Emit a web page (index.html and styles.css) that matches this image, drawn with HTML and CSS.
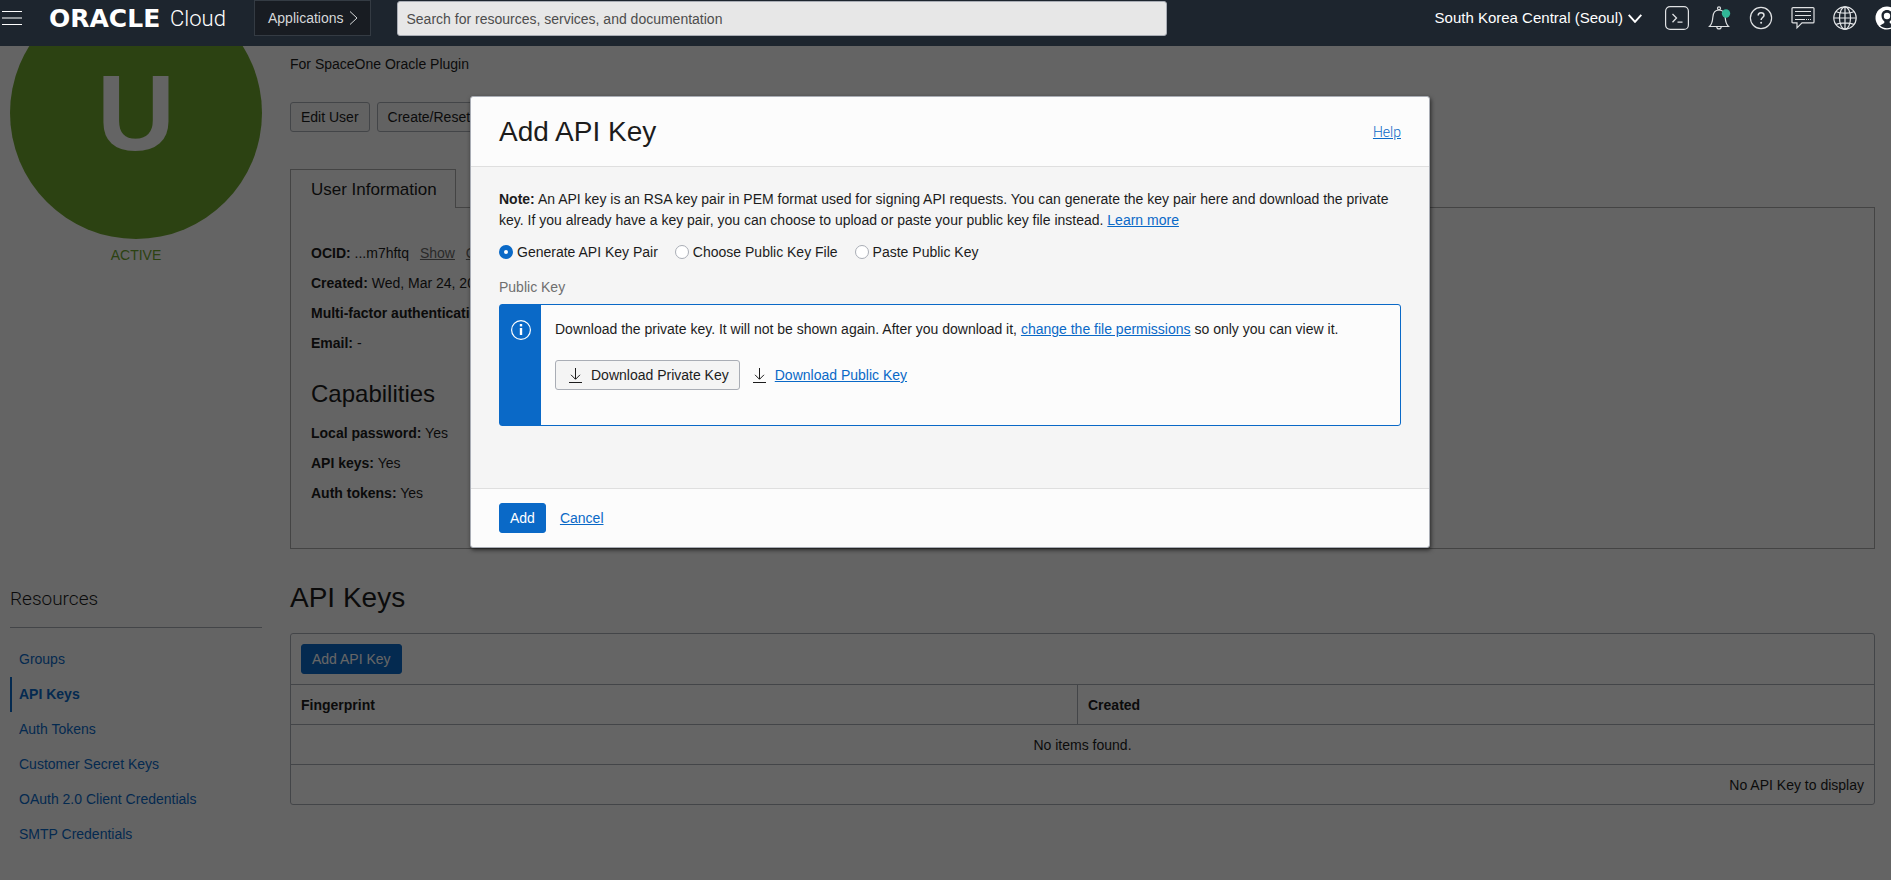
FILE: index.html
```html
<!DOCTYPE html>
<html lang="en">
<head>
<meta charset="utf-8">
<title>Oracle Cloud Infrastructure</title>
<meta name="viewport" content="width=device-width, initial-scale=1">
<link rel="stylesheet" href="styles.css">
</head>
<body>
<header class="topbar">
  <button class="icon-button menu-button" aria-label="Menu">
    <svg width="20" height="16" viewBox="0 0 20 16" fill="none" stroke="#fff"><path d="M0 1.5h20M0 14.5h20"/><path d="M0 8h20" stroke="#8f9498" stroke-width="2"/></svg>
  </button>
  <a class="brand" href="#"><span class="brand-name">ORACLE</span><span class="brand-product">Cloud</span></a>
  <button class="applications">Applications
    <svg width="9" height="14" viewBox="0 0 9 14" fill="none" stroke="#d5d7d9"><path d="M1 .5 8 7 1 13.5"/></svg>
  </button>
  <input class="search" type="search" aria-label="Search" placeholder="Search for resources, services, and documentation">
  <div class="tools">
    <button class="region">South Korea Central (Seoul)
      <svg width="14" height="9" viewBox="0 0 14 9" fill="none" stroke="#fff" stroke-width="2"><path d="m.7.8 6.3 7 6.3-7"/></svg>
    </button>
    <button class="icon-button" aria-label="Cloud Shell">
      <svg width="24" height="24" viewBox="0 0 24 24" fill="none" stroke="#dfe1e3"><rect x=".6" y=".6" width="22.8" height="22.8" rx="4.5" stroke-width="1.2"/><path d="m7.5 8 4 4-4 4.200M12.500 16.200h5" stroke-width="1.300"/></svg>
    </button>
    <button class="icon-button" aria-label="Announcements">
      <svg width="24" height="24" viewBox="0 0 24 24" fill="none" stroke="#dfe1e3" stroke-width="1.200"><path d="M2.500 20.500c2.600-2.500 3-5 3.300-9C6 7 7.700 4 12 4s6 3 6.200 7.500c.3 4 .7 6.500 3.300 9z"/><circle cx="12" cy="2.300" r="1.500"/><path d="M9.800 20.700a2.200 2.200 0 1 0 4.400 0"/><circle cx="19" cy="7.500" r="4.200" fill="#31b797" stroke="none"/></svg>
    </button>
    <button class="icon-button" aria-label="Help menu">
      <svg width="24" height="24" viewBox="0 0 24 24" fill="none" stroke="#dfe1e3"><circle cx="12" cy="12" r="10.600" stroke-width="1.200"/><path d="M9.200 9.600c0-1.700 1.100-2.800 2.900-2.800s2.900 1 2.900 2.500c0 2.200-2.900 2.300-2.900 4.700" stroke-width="1.500"/><circle cx="12.100" cy="16.700" r="1" fill="#dfe1e3" stroke="none"/></svg>
    </button>
    <button class="icon-button" aria-label="Chat">
      <svg width="24" height="24" viewBox="0 0 24 24" fill="none" stroke="#dfe1e3"><path d="M2 1.600h20q1 0 1 1v13.300q0 1-1 1h-11l-5 5v-5H2q-1 0-1-1V2.600q0-1 1-1z" stroke-width="1.200"/><path d="M4 5.500h16M4 9.500h16"/><path d="M4 13.500h10" /><path d="M15 13.500h6" stroke-dasharray="1 1"/></svg>
    </button>
    <button class="icon-button" aria-label="Language">
      <svg width="24" height="24" viewBox="0 0 24 24" fill="none" stroke="#e3e5e7" stroke-width="1.200"><circle cx="12" cy="12" r="11.200"/><ellipse cx="12" cy="12" rx="5.500" ry="11.200"/><path d="M12 .8v22.400M.8 12h22.400M3 5.500c4 2.200 14 2.200 18 0M3 18.500c4-2.200 14-2.200 18 0"/></svg>
    </button>
    <button class="icon-button" aria-label="Profile">
      <svg width="24" height="24" viewBox="0 0 24 24"><circle cx="12" cy="12" r="11.500" fill="#fff"/><path d="M12 4c-3.300 0-5.500 2.300-5.500 5.600 0 2.400 1 4.500 2.800 5.700v1.800l-4.300 2.400c4 3.600 10 3.600 14 0l-4.300-2.400v-1.800c1.800-1.200 2.800-3.300 2.800-5.700C17.500 6.300 15.300 4 12 4z" fill="#1d252e"/><circle cx="12" cy="10" r="3.200" fill="#fff"/></svg>
    </button>
  </div>
</header>

<main class="stage">
  <div class="page">
    <aside class="profile">
      <div class="avatar">U</div>
      <p class="status">ACTIVE</p>
    </aside>
    <section class="details">
      <p class="description">For SpaceOne Oracle Plugin</p>
      <div class="actions">
        <button class="button">Edit User</button>
        <button class="button">Create/Reset Password</button>
      </div>
      <h2 class="tab">User Information</h2>
      <div class="panel">
        <p><b>OCID:</b> ...m7hftq <a class="muted" href="#">Show</a> <a class="muted" href="#">Copy</a></p>
        <p><b>Created:</b> Wed, Mar 24, 2021</p>
        <p><b>Multi-factor authentication:</b> Disabled</p>
        <p><b>Email:</b> -</p>
        <h3>Capabilities</h3>
        <p><b>Local password:</b> Yes</p>
        <p><b>API keys:</b> Yes</p>
        <p><b>Auth tokens:</b> Yes</p>
      </div>
    </section>
    <aside class="resources">
      <h2>Resources</h2>
      <nav class="links">
        <a href="#">Groups</a>
        <a href="#" class="current">API Keys</a>
        <a href="#">Auth Tokens</a>
        <a href="#">Customer Secret Keys</a>
        <a href="#">OAuth 2.0 Client Credentials</a>
        <a href="#">SMTP Credentials</a>
      </nav>
    </aside>
    <section class="keys">
      <h1>API Keys</h1>
      <div class="card">
        <div class="toolbar"><button class="button primary">Add API Key</button></div>
        <table>
          <thead><tr><th class="fingerprint">Fingerprint</th><th>Created</th></tr></thead>
          <tbody><tr><td colspan="2" class="empty">No items found.</td></tr></tbody>
          <tfoot><tr><td colspan="2" class="count">No API Key to display</td></tr></tfoot>
        </table>
      </div>
    </section>
  </div>

  <div class="overlay">
    <div class="dialog" role="dialog" aria-modal="true" aria-labelledby="dialog-title">
      <div class="dialog-head">
        <h2 id="dialog-title">Add API Key</h2>
        <a class="help" href="#">Help</a>
      </div>
      <div class="dialog-body">
        <p class="note"><b>Note:</b> An API key is an RSA key pair in PEM format used for signing API requests. You can generate the key pair here and download the private key. If you already have a key pair, you can choose to upload or paste your public key file instead. <a href="#">Learn more</a></p>
        <div class="choices">
          <label><input type="radio" name="source" checked>Generate API Key Pair</label>
          <label><input type="radio" name="source">Choose Public Key File</label>
          <label><input type="radio" name="source">Paste Public Key</label>
        </div>
        <p class="caption">Public Key</p>
        <div class="notice">
          <div class="notice-mark">
            <svg width="20" height="20" viewBox="0 0 20 20" fill="none" stroke="#fff"><circle cx="10" cy="10" r="9.400" stroke-width="1.200"/><path d="M10 8v7" stroke-width="2.400"/><path d="M10 4v2.400" stroke-width="2.400"/></svg>
          </div>
          <div class="notice-body">
            <p>Download the private key. It will not be shown again. After you download it, <a href="#">change the file permissions</a> so only you can view it.</p>
            <div class="downloads">
              <button class="button download">
                <svg width="13" height="16" viewBox="0 0 13 16" fill="none" stroke="#1c1c1c"><path d="M6.500 1v11M2 7.800l4.500 4.500L11 7.800M0 15.500h13"/></svg>Download Private Key</button>
              <svg width="13" height="16" viewBox="0 0 13 16" fill="none" stroke="#1c1c1c"><path d="M6.500 1v11M2 7.800l4.500 4.500L11 7.800M0 15.500h13"/></svg>
              <a href="#">Download Public Key</a>
            </div>
          </div>
        </div>
      </div>
      <div class="dialog-foot">
        <button class="button primary">Add</button>
        <a href="#">Cancel</a>
      </div>
    </div>
  </div>
</main>
</body>
</html>
```
FILE: styles.css
```css
* {
  box-sizing: border-box;
}

body {
  margin: 0;
  background: #fafafa;
  color: #1c1c1c;
  font: 14px/20px "Liberation Sans", Arial, sans-serif;
  overflow: hidden;
}

h1, h2, h3, p {
  margin: 0;
  font-weight: normal;
}

a {
  color: #0a69c7;
}

button, input {
  font: inherit;
}

svg {
  display: block;
  flex: none;
}

/* Top bar */
.topbar {
  display: flex;
  align-items: flex-start;
  height: 46px;
  padding-left: 2px;
  background: #1d252e;
  overflow: hidden;
}

.icon-button {
  display: flex;
  align-items: center;
  height: 36px;
  padding: 0;
  border: 0;
  background: none;
}

.menu-button {
  margin-right: 27px;
}

.brand {
  display: flex;
  align-items: center;
  width: 205px;
  height: 38px;
  color: #fff;
  text-decoration: none;
}

.brand-name {
  width: 121px;
  font: bold 25px/38px "DejaVu Sans", sans-serif;
}

.brand-product {
  font: 300 22px/38px Roboto, sans-serif;
}

.applications {
  display: flex;
  align-items: center;
  gap: 5px;
  height: 36px;
  padding: 0 12px 0 13px;
  border: 1px solid #343b43;
  background: #181c22;
  color: #d5d7d9;
}

.search {
  flex: 0 1 770px;
  min-width: 0;
  height: 35px;
  margin: 1px 20px 0 26px;
  padding: 0 9px;
  border: 1px solid #a9adb5;
  border-radius: 3px;
  background: #e7e7e7;
}

.search::placeholder {
  color: #4d4d4d;
  opacity: 1;
}

.tools {
  display: flex;
  gap: 18px;
  margin-left: auto;
  margin-right: -8px;
}

.region {
  display: flex;
  align-items: center;
  gap: 5px;
  height: 36px;
  margin-right: 5px;
  padding: 0;
  border: 0;
  background: none;
  color: #fff;
  font-size: 15px;
  white-space: nowrap;
}

/* Page */
.stage {
  position: relative;
  min-height: calc(100vh - 46px);
  overflow: hidden;
}

.page {
  display: grid;
  grid-template-columns: 252px 1fr;
  column-gap: 28px;
  padding: 0 16px 0 10px;
}

.avatar {
  display: flex;
  align-items: center;
  justify-content: center;
  height: 252px;
  margin-top: -59px;
  border-radius: 50%;
  background: #6ea52d;
  color: #fafafa;
  font-size: 108px;
  font-weight: bold;
}

.status {
  margin-top: 6px;
  color: #6ea52d;
  text-align: center;
}

.description {
  margin: 8px 0 28px;
}

.actions {
  display: flex;
  gap: 7px;
  margin-bottom: 37px;
}

.button {
  height: 30px;
  padding: 0 10px;
  border: 1px solid #a9adb5;
  border-radius: 3px;
  background: #f4f4f4;
  color: #1c1c1c;
}

.primary {
  border-color: #0a69c7;
  background: #0a69c7;
  color: #fff;
}

.tab {
  position: relative;
  width: fit-content;
  height: 39px;
  margin-bottom: -1px;
  padding: 0 18px 0 20px;
  border: 1px solid #aaa;
  border-bottom: 0;
  background: #fafafa;
  font-size: 17px;
  line-height: 40px;
}

.panel {
  padding: 30px 20px 40px;
  border: 1px solid #aaa;
  line-height: 30px;
}

.panel h3 {
  margin: 18px 0 6px;
  font-size: 24px;
  line-height: 36px;
}

.muted {
  margin-left: 7px;
  color: #6a6a6a;
}

.resources {
  padding-top: 38px;
}

.resources h2 {
  padding-bottom: 16px;
  border-bottom: 1px solid #a9adb5;
  font: 300 19px/24px Roboto, sans-serif;
}

.links {
  display: flex;
  flex-direction: column;
  margin-top: 14px;
  line-height: 35px;
}

.links a {
  padding-left: 9px;
  text-decoration: none;
}

.links .current {
  padding-left: 7px;
  border-left: 2px solid #0a69c7;
  font-weight: bold;
}

.keys h1 {
  margin: 31px 0 17px;
  font-size: 28px;
  line-height: 36px;
}

.card {
  border: 1px solid #a9adb5;
  border-radius: 3px;
  background: #fcfcfc;
}

.toolbar {
  padding: 10px;
}

.toolbar .button {
  display: block;
}

table {
  width: 100%;
  border-collapse: separate;
  border-spacing: 0;
}

th, td {
  height: 40px;
  padding: 0 10px;
  border-top: 1px solid #a9adb5;
  text-align: left;
}

.fingerprint {
  width: 787px;
  border-right: 1px solid #a9adb5;
}

.empty {
  text-align: center;
}

.count {
  text-align: right;
}

/* Dialog */
.overlay {
  position: absolute;
  inset: 0;
  display: flex;
  align-items: flex-start;
  justify-content: center;
  padding: 50px 0 0 9px;
  background: rgba(0, 0, 0, 0.6);
}

.dialog {
  width: 960px;
  border: 1px solid #a9adb5;
  border-radius: 3px;
  background: #fcfcfc;
  box-shadow: 1px 2px 4px rgba(0, 0, 0, 0.6);
}

.dialog-head {
  display: flex;
  align-items: center;
  justify-content: space-between;
  height: 70px;
  padding: 0 28px;
  border-bottom: 1px solid #dfdfdf;
}

.dialog-head h2 {
  font-size: 28px;
  line-height: 36px;
}

.help {
  font-family: Roboto, sans-serif;
  font-weight: 300;
}

.dialog-body {
  padding: 22px 28px 62px;
  background: #f5f5f5;
}

.note {
  line-height: 21px;
}

.choices {
  display: flex;
  gap: 17px;
  margin: 11px 0 15px;
}

.choices label {
  display: flex;
  align-items: center;
  gap: 4px;
}

.choices input {
  appearance: none;
  width: 14px;
  height: 14px;
  margin: 0;
  border: 1px solid #a9adb5;
  border-radius: 50%;
  background: #fff;
}

.choices input:checked {
  border: 5px solid #0a69c7;
}

.caption {
  margin-bottom: 7px;
  color: #6f6f6f;
}

.notice {
  display: flex;
  min-height: 122px;
  border: 1px solid #0a69c7;
  border-radius: 3px;
  background: #fcfcfc;
}

.notice-mark {
  padding: 15px 10px 0 11px;
  background: #0a69c7;
}

.notice-body {
  padding: 14px;
}

.downloads {
  display: flex;
  align-items: center;
  margin-top: 21px;
}

.downloads > svg {
  margin: 0 9px 0 13px;
}

.download {
  display: flex;
  align-items: center;
  gap: 9px;
  padding-left: 13px;
}

.dialog-foot {
  display: flex;
  align-items: center;
  gap: 14px;
  height: 59px;
  padding: 0 28px;
  border-top: 1px solid #dfdfdf;
}
```
